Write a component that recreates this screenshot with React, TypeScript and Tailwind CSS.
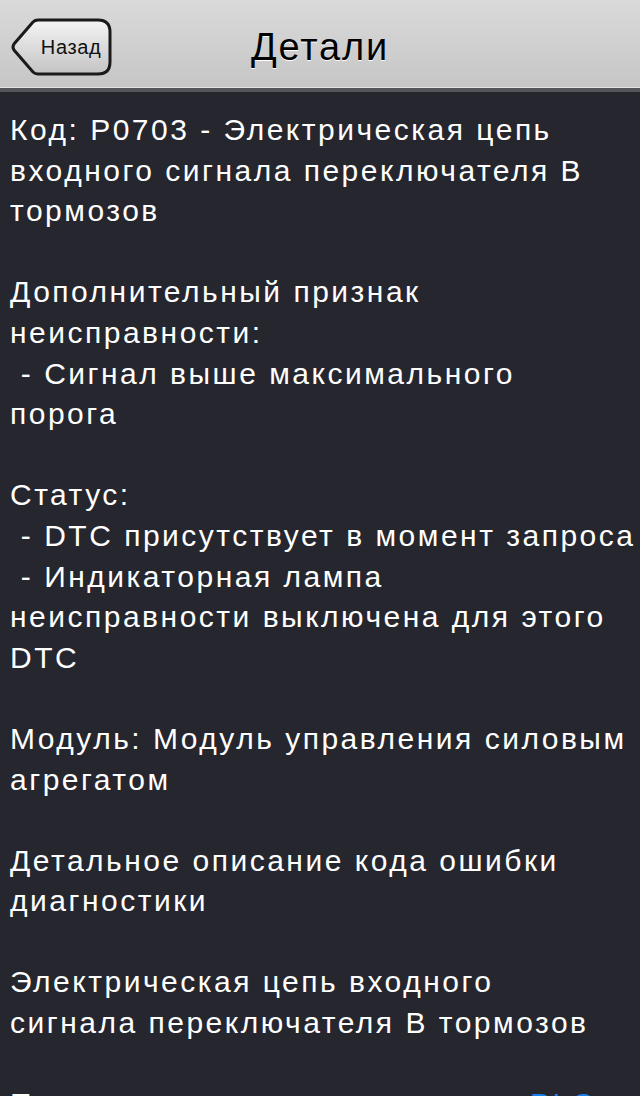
const lines = [
  "Код: P0703 - Электрическая цепь",
  "входного сигнала переключателя B",
  "тормозов",
  "",
  "Дополнительный признак",
  "неисправности:",
  " - Сигнал выше максимального",
  "порога",
  "",
  "Статус:",
  " - DTC присутствует в момент запроса",
  " - Индикаторная лампа",
  "неисправности выключена для этого",
  "DTC",
  "",
  "Модуль: Модуль управления силовым",
  "агрегатом",
  "",
  "Детальное описание кода ошибки",
  "диагностики",
  "",
  "Электрическая цепь входного",
  "сигнала переключателя B тормозов",
  "",
];

const BackButton = () => (
  <button className="relative ml-[10px] mt-[6px] h-[58px] w-[102px]">
    <svg className="absolute inset-0" width="102" height="58" viewBox="0 0 102 58">
      <defs>
        <linearGradient id="bb" x1="0" y1="0" x2="0" y2="1">
          <stop offset="0" stopColor="#f4f4f4" />
          <stop offset="0.5" stopColor="#dcdcdc" />
          <stop offset="1" stopColor="#c4c4c4" />
        </linearGradient>
      </defs>
      <path
        d="M28 2 H88 Q100 2 100 14 V44 Q100 56 88 56 H28 Q25 56 23 54 L4 32 Q2 29 4 26 L23 4 Q25 2 28 2 Z"
        fill="url(#bb)"
        stroke="#1a1a1a"
        strokeWidth="3"
      />
    </svg>
    <span className="relative block pl-[20px] pt-[1px] text-[20px] tracking-[0.6px] text-[#111]">
      Назад
    </span>
  </button>
);

export default function App() {
  return (
    <div className="flex h-[1096px] w-[640px] flex-col overflow-hidden bg-[#25262e] [font-family:'Liberation_Sans',Arial,sans-serif]">
      <div className="relative flex h-[87px] shrink-0 items-center bg-gradient-to-b from-[#dadada] to-[#c6c6c6]">
        <BackButton />
        <div className="absolute inset-x-0 top-[28px] text-center text-[38px] leading-none tracking-[1.8px] text-black [text-shadow:0_1px_0_#ffffff]">
          Детали
        </div>
      </div>
      <div className="h-[1px] shrink-0 bg-[#e2e2e2]" />
      <div className="h-[4px] shrink-0 bg-[#55565c]" />
      <div className="pl-[10px] pt-[18px] text-[30px] leading-[40.6px] tracking-[2.5px] text-white">
        {lines.map((line, i) => (
          <div key={i} className="h-[40.6px] whitespace-pre">
            {line}
          </div>
        ))}
        <div className="flex whitespace-pre">
          <span className="w-[520px]">Протокол связи:</span>
          <span className="text-[#1a7fe8]">PLC</span>
        </div>
      </div>
    </div>
  );
}
